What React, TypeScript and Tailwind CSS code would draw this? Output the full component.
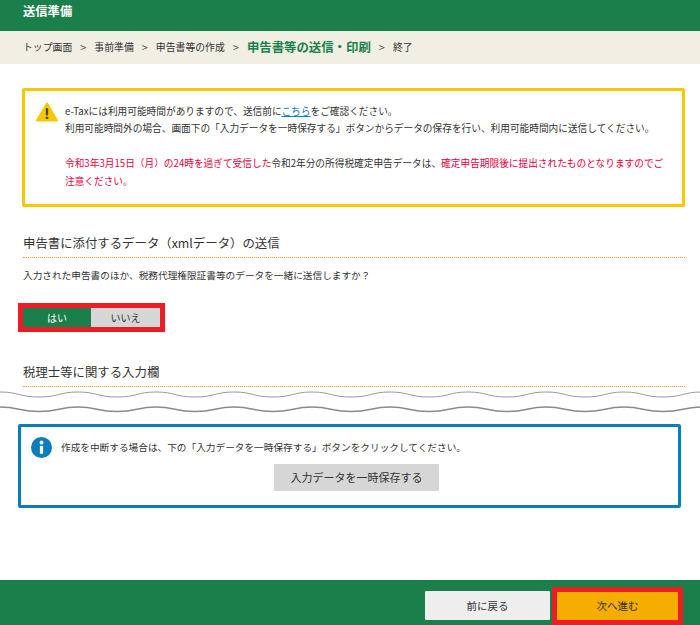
const font = { fontFamily: '"Noto Sans CJK JP", "Noto Sans", sans-serif' };

function Wave() {
  const d = (y: number, a: number) => {
    let s = `M-39 ${y}`;
    for (let x = -39; x < 720; x += 78) {
      s += ` C${x + 20} ${y} ${x + 20} ${y - a} ${x + 39} ${y - a} S${x + 58} ${y} ${x + 78} ${y}`;
    }
    return s;
  };
  return (
    <svg width="700" height="26" viewBox="0 0 700 26" className="block">
      <path d={d(10, 5)} fill="none" stroke="#999999" strokeWidth="1" />
      <path d={d(24.5, 4.5)} fill="none" stroke="#8a8a8a" strokeWidth="1.4" />
    </svg>
  );
}

function Chevron() {
  return <span className="mx-[8px] text-[11px] text-[#555]">&gt;</span>;
}

export default function App() {
  return (
    <div style={font} className="flex min-h-[625px] w-[700px] flex-col bg-white text-[#333]">
      <header className="flex h-[31px] items-start bg-[#1a7f4b] pl-[23px] pt-[3px] text-[12.3px] leading-[17px] font-bold text-white">
        送信準備
      </header>
      <nav className="flex h-[33px] items-center bg-[#f1efe4] pl-[23px] text-[9.85px] whitespace-nowrap">
        <span>トップ画面</span>
        <Chevron />
        <span>事前準備</span>
        <Chevron />
        <span>申告書等の作成</span>
        <Chevron />
        <span className="text-[12.4px] font-bold text-[#1a7f4b]">申告書等の送信・印刷</span>
        <Chevron />
        <span>終了</span>
      </nav>

      <section className="mx-[22px] mt-[24px] flex h-[119px] w-[663px] rounded-[2px] border-[3px] border-[#f5c800] pl-[11px] pr-[13px] pt-[12px] text-[9.68px] leading-[17.4px]">
        <svg width="22" height="20" viewBox="0 0 22 20" className="mr-[7px] mt-[-1px] shrink-0">
          <path d="M11 1.5 L21 18.5 H1 Z" fill="#f5c800" stroke="#f5c800" strokeWidth="2" strokeLinejoin="round" />
          <rect x="9.8" y="6" width="2.4" height="7.5" rx="1" fill="#4a4a3a" />
          <rect x="9.8" y="14.7" width="2.4" height="2.4" rx="0.6" fill="#4a4a3a" />
        </svg>
        <div>
          <p>
            e-Taxには利用可能時間がありますので、送信前に
            <span className="text-[#0b7dbd] underline">こちら</span>
            をご確認ください。
          </p>
          <p>利用可能時間外の場合、画面下の「入力データを一時保存する」ボタンからデータの保存を行い、利用可能時間内に送信してください。</p>
          <p className="mt-[17.4px]">
            <span className="text-[#e6003c]">令和3年3月15日（月）の24時を過ぎて受信した</span>
            令和2年分の所得税確定申告データは、
            <span className="text-[#e6003c]">確定申告期限後に提出されたものとなりますのでご注意ください。</span>
          </p>
        </div>
      </section>

      <section className="ml-[23px] mt-[26px] w-[662px]">
        <h2 className="border-b border-dotted border-[#f09a10] pb-[4px] text-[12.4px] leading-[20px]">
          申告書に添付するデータ（xmlデータ）の送信
        </h2>
        <p className="mt-[9px] text-[9.67px] leading-[17px]">入力された申告書のほか、税務代理権限証書等のデータを一緒に送信しますか？</p>
      </section>

      <div className="ml-[18px] mt-[19px] flex h-[29px] w-[147px] border-[5px] border-[#ee1c25] text-[10px]">
        <button className="w-[68px] bg-[#1a7f4b] text-white">はい</button>
        <button className="w-[69px] bg-[#d6d6d6]">いいえ</button>
      </div>

      <section className="ml-[23px] mt-[30px] w-[662px]">
        <h2 className="border-b border-dotted border-[#f09a10] pb-[4px] text-[12.4px] leading-[20px]">税理士等に関する入力欄</h2>
      </section>

      <Wave />

      <section className="mx-[18px] mt-[11px] h-[84px] w-[663px] rounded-[2px] border-[3px] border-[#0b7dbd] pt-[10px] text-[9.67px]">
        <div className="flex items-center pl-[10px]">
          <svg width="21" height="21" viewBox="0 0 21 21" className="mr-[9px] shrink-0">
            <circle cx="10.5" cy="10.5" r="10.5" fill="#0b7dbd" />
            <circle cx="10.5" cy="5.5" r="1.9" fill="#fff" />
            <rect x="8.9" y="8.8" width="3.2" height="8" rx="0.6" fill="#fff" />
          </svg>
          <span>作成を中断する場合は、下の「入力データを一時保存する」ボタンをクリックしてください。</span>
        </div>
        <div className="ml-[253px] mt-[6px] flex">
          <button className="h-[27px] w-[165px] rounded-[1px] bg-[#d6d6d6] text-[11px]">入力データを一時保存する</button>
        </div>
      </section>

      <footer className="mt-auto flex h-[45px] items-start justify-end bg-[#1a7f4b] pr-[17px] pt-[7px]">
        <button className="mt-[4px] h-[29px] w-[125px] rounded-[1px] bg-[#eeeeee] text-[10.5px]">前に戻る</button>
        <button className="ml-[2px] h-[38px] w-[131px] border-[5px] border-[#ee1c25] bg-[#f5ad00] text-[10.5px]">次へ進む</button>
      </footer>
    </div>
  );
}
